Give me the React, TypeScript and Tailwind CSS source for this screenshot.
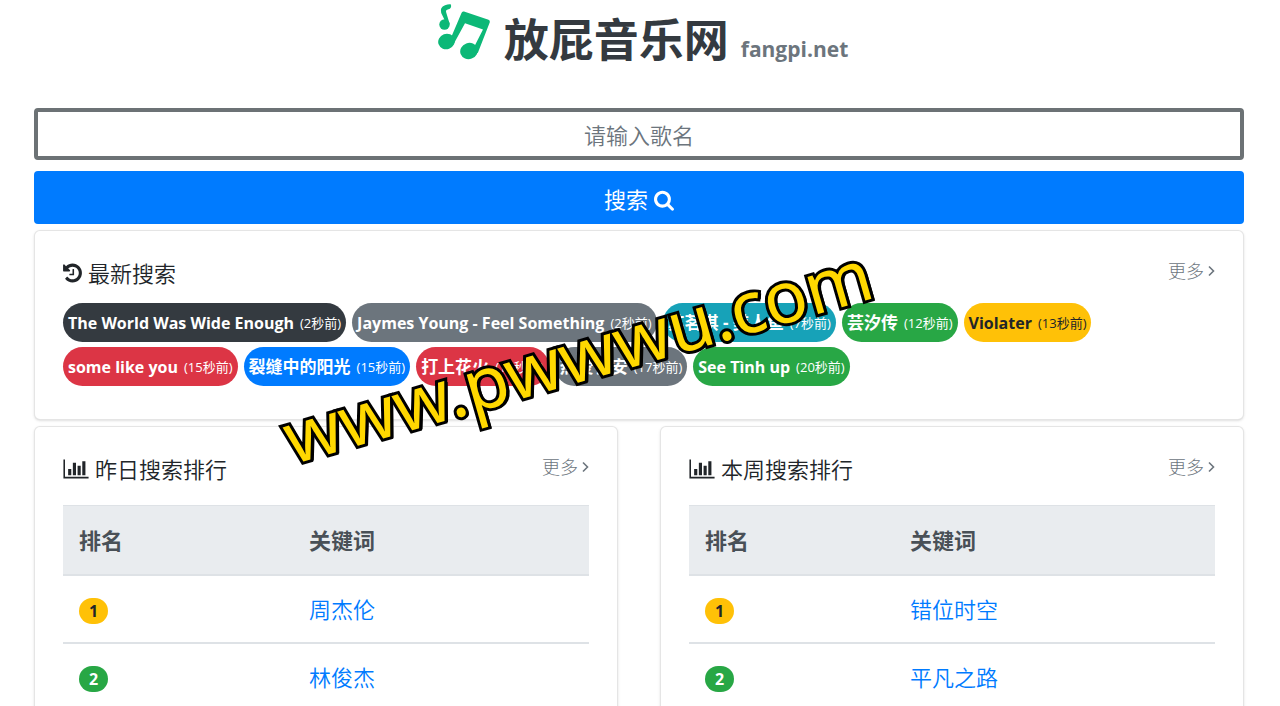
import React from "react";

type IconProps = { className?: string };

const HistoryIcon = ({ className }: IconProps) => (
  <svg viewBox="128 0 1536 1792" fill="currentColor" className={className} aria-hidden="true">
    <path d="M1664 896q0 156-61 298t-164 245-245 164-298 61q-172 0-327-72.5T305 1387q-7-10-6.500-22.500t8.500-20.500l137-138q10-9 25-9 16 2 23 12 73 95 179 147t225 52q104 0 198.500-40.500T1258 1258t109.500-163.500T1408 896t-40.500-198.500T1258 534t-163.500-109.500T896 384q-98 0-188 35.500T548 521l137 138q31 30 14 69-17 40-59 40H192q-26 0-45-19t-19-45V256q0-42 40-59 39-17 69 14l130 129q107-101 244.500-156.500T896 128q156 0 298 61t245 164 164 245 61 298zM1024 608v448q0 14-9 23t-23 9H672q-14 0-23-9t-9-23v-64q0-14 9-23t23-9h224V608q0-14 9-23t23-9h64q14 0 23 9t9 23z" />
  </svg>
);

const SearchIcon = ({ className }: IconProps) => (
  <svg viewBox="64 0 1664 1792" fill="currentColor" className={className} aria-hidden="true">
    <path d="M1216 832q0-185-131.500-316.500T768 384 451.500 515.500 320 832t131.500 316.500T768 1280t316.500-131.500T1216 832zm512 832q0 52-38 90t-90 38q-54 0-90-38l-343-342q-179 124-399 124-143 0-273.500-55.500t-225-150-150-225T64 832t55.500-273.500 150-225 225-150T768 128t273.500 55.500 225 150 150 225T1472 832q0 220-124 399l343 343q37 37 37 90z" />
  </svg>
);

const ChartIcon = ({ className }: IconProps) => (
  <svg viewBox="0 0 2048 1792" fill="currentColor" className={className} aria-hidden="true">
    <path d="M640 896v512H384V896h256zm384-512v1024H768V384h256zm1024 1152v128H0V128h128v1408h1920zm-640-896v768h-256V640h256zm384-384v1152h-256V256h256z" />
  </svg>
);

const AngleIcon = ({ className }: IconProps) => (
  <svg viewBox="0 0 7 12" fill="none" stroke="currentColor" strokeWidth="1.6" className={className} aria-hidden="true">
    <path d="M1 1.500 5.500 6 1 10.500" />
  </svg>
);

const NotesLogo = ({ className }: IconProps) => (
  <svg viewBox="0 0 54 56" fill="#0cb877" className={className} aria-hidden="true">
    <ellipse cx="8.500" cy="37.500" rx="8.400" ry="7.700" transform="rotate(-20 8.500 37.500)" />
    <ellipse cx="31" cy="47" rx="8.900" ry="8" transform="rotate(-20 31 47)" />
    <path d="M23.500 9q.6-2 2.500-1.400l24.500 8.200q1.800.7 1.300 2.500L39.800 49l-5.500-2.500L45 25.500 27 19.300 16.200 39l-4.200-3z" />
    <circle cx="6.500" cy="20.500" r="5.200" />
    <path d="M8.300 19.500 3.200 9Q1.500 3.200 7 1.200q3.500-1.200 6-.8.7 4.200-2.500 4.900-3.200.5-2.300 3.200L11.700 20z" />
  </svg>
);

const MoreLink = () => (
  <a href="#more" className="flex items-center gap-1 text-lg leading-6 font-light text-[#6c757d]">
    更多
    <AngleIcon className="h-3 w-[7px]" />
  </a>
);

const recent = [
  { name: "The World Was Wide Enough", ago: 2, tone: "bg-[#343a40] text-white", size: "text-base" },
  { name: "Jaymes Young - Feel Something", ago: 2, tone: "bg-[#6c757d] text-white", size: "text-base" },
  { name: "苏茗淇 - 美人鱼", ago: 7, tone: "bg-[#17a2b8] text-white", size: "text-[17px]" },
  { name: "芸汐传", ago: 12, tone: "bg-[#28a745] text-white", size: "text-[17px]" },
  { name: "Violater", ago: 13, tone: "bg-[#ffc107] text-[#212529]", size: "text-base" },
  { name: "some like you", ago: 15, tone: "bg-[#dc3545] text-white", size: "text-base" },
  { name: "裂缝中的阳光", ago: 15, tone: "bg-[#007bff] text-white", size: "text-[17px]" },
  { name: "打上花火", ago: 16, tone: "bg-[#dc3545] text-white", size: "text-[17px]" },
  { name: "热爱长安", ago: 17, tone: "bg-[#6c757d] text-white", size: "text-[17px]" },
  { name: "See Tình up", ago: 20, tone: "bg-[#28a745] text-white", size: "text-base" },
];

const rankTones = ["bg-[#ffc107] text-[#212529]", "bg-[#28a745] text-white"];

type RankingProps = { title: string; words: string[]; rankColumn: string };

const Ranking = ({ title, words, rankColumn }: RankingProps) => (
  <section className="rounded-md border border-black/10 bg-white px-7 pt-7 pb-7 shadow-sm">
    <header className="flex items-start justify-between">
      <h2 className="flex items-center gap-1.5 text-[22px] leading-7 font-[350]">
        <ChartIcon className="h-[22px] w-[26px]" />
        {title}
      </h2>
      <MoreLink />
    </header>
    <table className="mt-[22px] w-full border-collapse text-left text-[22px] leading-8">
      <thead className="bg-[#e9ecef] text-[#495057]">
        <tr className="border-t border-b-2 border-[#dee2e6]">
          <th className={`${rankColumn} px-4 py-[18px] font-bold`}>排名</th>
          <th className="px-4 py-[18px] font-bold">关键词</th>
        </tr>
      </thead>
      <tbody>
        {words.map((word, i) => (
          <tr key={word} className="border-b-2 border-[#dee2e6]">
            <td className="px-4 py-[17px]">
              <span className={`${rankTones[i]} mt-1 flex h-[26px] w-[29px] items-center justify-center rounded-full text-base leading-6 font-bold`}>
                {i + 1}
              </span>
            </td>
            <td className="px-4 py-[17px] font-[350]">
              <a href="#song" className="text-[#007bff]">{word}</a>
            </td>
          </tr>
        ))}
      </tbody>
    </table>
  </section>
);

export default function App() {
  return (
    <div className="relative h-screen overflow-hidden bg-white pr-9 pl-[34px] font-['Open_Sans','Noto_Sans_CJK_SC',sans-serif] text-[#212529]">
      <header className="flex items-start justify-center pt-1 pl-2">
        <NotesLogo className="h-14 w-[54px]" />
        <h1 className="ml-3 flex items-baseline gap-3 pt-2 text-[45px] leading-[56px] font-bold text-[#343a40]">
          放屁音乐网
          <small className="text-[21px] leading-8 font-bold text-[#6c757d]">fangpi.net</small>
        </h1>
      </header>

      <form className="mt-10 flex flex-col gap-[11px]" onSubmit={(e) => e.preventDefault()}>
        <input
          type="text"
          aria-label="歌名"
          placeholder="请输入歌名"
          className="h-[52px] w-full rounded border-4 border-[#6c7275] pt-0.5 text-center text-[22px] font-[350] placeholder:text-[#6c757d]"
        />
        <button type="submit" className="flex h-[53px] w-full items-center justify-center gap-1.5 rounded bg-[#007bff] pt-1 text-[22px] text-white">
          搜索
          <SearchIcon className="h-[22px] w-5" />
        </button>
      </form>

      <main className="mt-1.5 flex flex-col gap-1.5">
        <section className="rounded-md border border-black/10 bg-white px-7 pt-7 pb-[33px] shadow-sm">
          <header className="flex items-start justify-between">
            <h2 className="flex items-center gap-1.5 text-[22px] leading-7 font-[350]">
              <HistoryIcon className="h-[22px] w-[19px]" />
              最新搜索
            </h2>
            <MoreLink />
          </header>
          <div className="mt-4 flex max-w-[1080px] flex-wrap gap-x-1.5 gap-y-[5px]">
            {recent.map((item) => (
              <a key={item.name} href="#song" className={`${item.tone} ${item.size} flex h-[39px] items-center gap-1.5 rounded-full px-[5px] font-bold whitespace-nowrap`}>
                {item.name}
                <small className="pt-0.5 text-[13px] font-normal">({item.ago}秒前)</small>
              </a>
            ))}
          </div>
        </section>

        <div className="grid grid-cols-2 gap-[42px]">
          <Ranking title="昨日搜索排行" words={["周杰伦", "林俊杰"]} rankColumn="w-[230px]" />
          <Ranking title="本周搜索排行" words={["错位时空", "平凡之路"]} rankColumn="w-[205px]" />
        </div>
      </main>

      <div className="pointer-events-none absolute top-[304px] left-[273px] -rotate-16 font-['Noto_Sans',sans-serif] text-[72px] leading-[100px] font-normal whitespace-nowrap text-[#ffd800] [paint-order:stroke_fill] [-webkit-text-stroke:6px_#000] [text-shadow:3px_2px_0_#000]">
        www.pwwwu.com
      </div>
    </div>
  );
}
